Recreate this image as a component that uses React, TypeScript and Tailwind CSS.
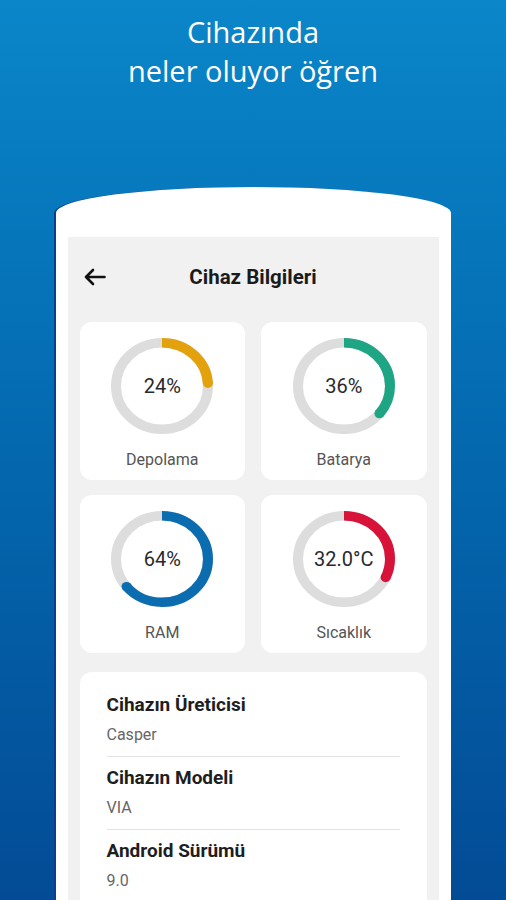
const gauges = [
  { label: "Depolama", value: "24%", pct: 0.24, color: "#e3a20d" },
  { label: "Batarya", value: "36%", pct: 0.36, color: "#1ea584" },
  { label: "RAM", value: "64%", pct: 0.64, color: "#0b6db0" },
  { label: "Sıcaklık", value: "32.0°C", pct: 0.32, color: "#d8133a" },
];

const infos = [
  { title: "Cihazın Üreticisi", value: "Casper" },
  { title: "Cihazın Modeli", value: "VIA" },
  { title: "Android Sürümü", value: "9.0" },
];

function Gauge({ pct, color }: { pct: number; color: string }) {
  const r = 46;
  const c = 2 * Math.PI * r;
  const a = ((-90 + pct * 360) * Math.PI) / 180;
  return (
    <svg width="102" height="96" viewBox="0 0 102 102" preserveAspectRatio="none">
      <circle cx="51" cy="51" r={r} fill="none" stroke="#dddddd" strokeWidth="10" />
      <circle
        cx="51"
        cy="51"
        r={r}
        fill="none"
        stroke={color}
        strokeWidth="10"
        strokeDasharray={`${pct * c} ${c}`}
        transform="rotate(-90 51 51)"
      />
      <circle cx={51 + r * Math.cos(a)} cy={51 + r * Math.sin(a)} r="5" fill={color} />
    </svg>
  );
}

export default function App() {
  return (
    <div className="h-[900px] w-[506px] overflow-hidden bg-gradient-to-b from-[#0b86c9] to-[#034b95] flex flex-col items-center">
      <h1 className="pt-[12px] text-center text-[29px] leading-[39px] text-white font-['Open_Sans',sans-serif]">
        Cihazında
        <br />
        neler oluyor öğren
      </h1>

      <div className="mt-[97px] w-[395px] flex-1 bg-white px-3 pt-[50px] rounded-tl-[50%_26px] rounded-tr-[50%_26px] shadow-[-2px_0_0_#0a3f8c]">
        <div className="h-full bg-[#f1f1f1] font-['Roboto',sans-serif]">
          <div className="grid h-[80px] grid-cols-[40px_1fr_40px] items-center px-4">
            <svg width="22" height="18" viewBox="0 0 22 18" fill="none" stroke="#111" strokeWidth="2.6" strokeLinecap="round" strokeLinejoin="round">
              <path d="M20.5 9H2M9 2L2 9l7 7" />
            </svg>
            <div className="text-center text-[20.5px] font-bold text-[#1b1b1b]">Cihaz Bilgileri</div>
            <div />
          </div>

          <div className="mt-[5px] grid grid-cols-2 gap-x-4 gap-y-[15px] px-3">
            {gauges.map((g) => (
              <div key={g.label} className="flex h-[158px] flex-col items-center rounded-xl bg-white pt-[16px]">
                <div className="relative">
                  <Gauge pct={g.pct} color={g.color} />
                  <div className="absolute inset-0 flex items-center justify-center text-[20px] text-[#2a2a2a]">
                    {g.value}
                  </div>
                </div>
                <div className="mt-[16px] text-[16px] leading-5 text-[#555]">{g.label}</div>
              </div>
            ))}
          </div>

          <div className="mx-3 mt-[19px] rounded-xl bg-white px-[27px] pt-[12px] pb-4">
            {infos.map((it) => (
              <div key={it.title} className="border-b border-[#e3e3e3] pt-[9px] pb-[11px]">
                <div className="text-[19px] leading-6 font-bold text-[#1e1e1e]">{it.title}</div>
                <div className="mt-2 text-[16px] leading-5 text-[#666]">{it.value}</div>
              </div>
            ))}
          </div>
        </div>
      </div>
    </div>
  );
}
